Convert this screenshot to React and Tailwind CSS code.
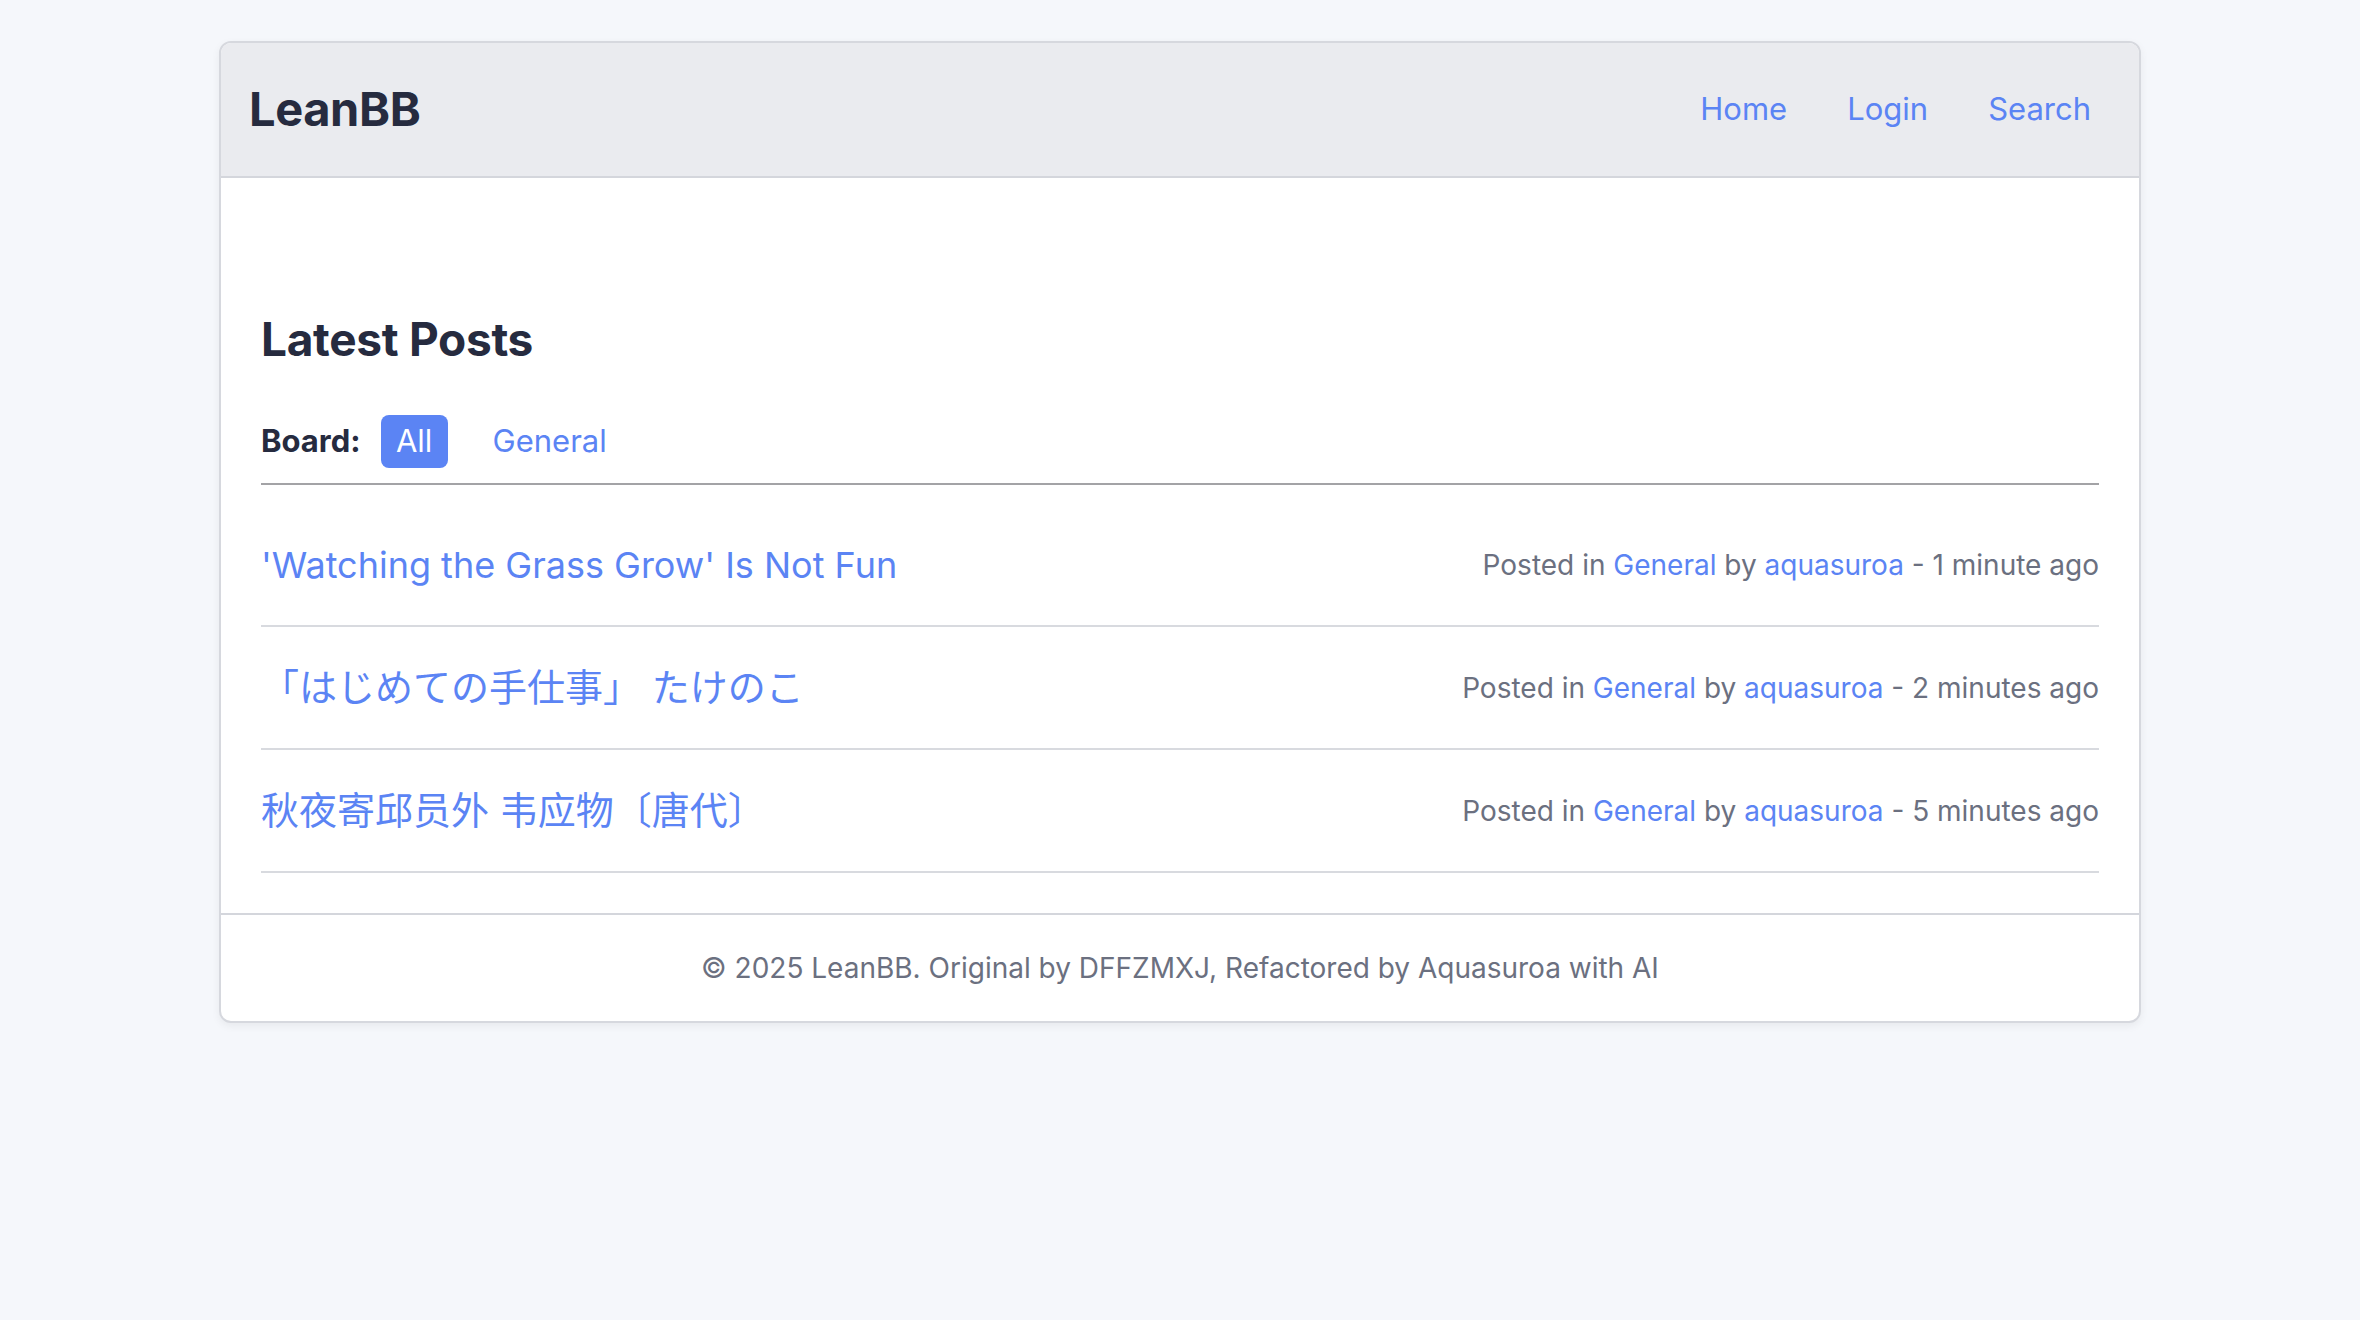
import React from 'react'

const posts = [
    { id: 1, title: "'Watching the Grass Grow' Is Not Fun", board: 'General', user: 'aquasuroa', ago: '1 minute ago', font: 'text-[36px] font-["Inter","Noto_Sans_CJK_SC",sans-serif]' },
    { id: 2, title: '「はじめての手仕事」 たけのこ', board: 'General', user: 'aquasuroa', ago: '2 minutes ago', font: 'text-[38px] font-["Inter","Noto_Sans_CJK_JP",sans-serif]' },
    { id: 3, title: '秋夜寄邱员外 韦应物〔唐代〕', board: 'General', user: 'aquasuroa', ago: '5 minutes ago', font: 'text-[38px] font-["Inter","Noto_Sans_CJK_SC",sans-serif]' },
]

export default function App() {
    return (
        <div className='min-h-[1320px] bg-[#f5f7fb] pt-[41px] font-["Inter",sans-serif]'>
            <div className="mx-auto w-[1922px] overflow-hidden rounded-[12px] border-2 border-[#d6d8de] bg-white shadow-[0_3px_8px_rgba(0,0,0,0.06)]">
                {/* header */}
                <header className="flex h-[135px] items-center justify-between border-b-2 border-[#d4d6dc] bg-[#eaebef] pl-[28px] pr-[48px]">
                    <div className="text-[47px] font-bold tracking-[-0.4px] text-[#262b3f]">LeanBB</div>
                    <nav className="flex items-center gap-[60px] text-[31px] text-[#5b84f4]">
                        <a>Home</a>
                        <a>Login</a>
                        <a>Search</a>
                    </nav>
                </header>

                {/* main */}
                <main className="px-[40px] pb-[40px] pt-[134px]">
                    <h2 className="text-[46px] font-bold leading-[55px] tracking-[-0.3px] text-[#262b3f]">Latest Posts</h2>

                    <div className="mt-[48px] flex items-center border-b-2 border-[#a3a3a6] pb-[15px]">
                        <span className="mr-[20px] text-[31px] font-bold text-[#262b3f]">Board:</span>
                        <span className="flex h-[53px] w-[67px] items-center justify-center rounded-[8px] bg-[#5b84f4] text-[31px] text-white">All</span>
                        <span className="ml-[45px] text-[31px] text-[#5b84f4]">General</span>
                    </div>

                    <div className="mt-[19px]">
                        {posts.map(p => (
                            <div key={p.id} className="flex h-[123px] items-center justify-between border-b-2 border-[#d8dadf]">
                                <a className={`${p.font} text-[#5b84f4]`}>{p.title}</a>
                                <div className="text-[28px] text-[#6b7080]">
                                    Posted in <a className="text-[#5b84f4]">{p.board}</a> by <a className="text-[#5b84f4]">{p.user}</a> - {p.ago}
                                </div>
                            </div>
                        ))}
                    </div>
                </main>

                {/* footer */}
                <footer className="flex h-[108px] items-center justify-center border-t-2 border-[#d4d6dc] text-[28px] text-[#6b7080]">
                    © 2025 LeanBB. Original by DFFZMXJ, Refactored by Aquasuroa with AI
                </footer>
            </div>
        </div>
    )
}
